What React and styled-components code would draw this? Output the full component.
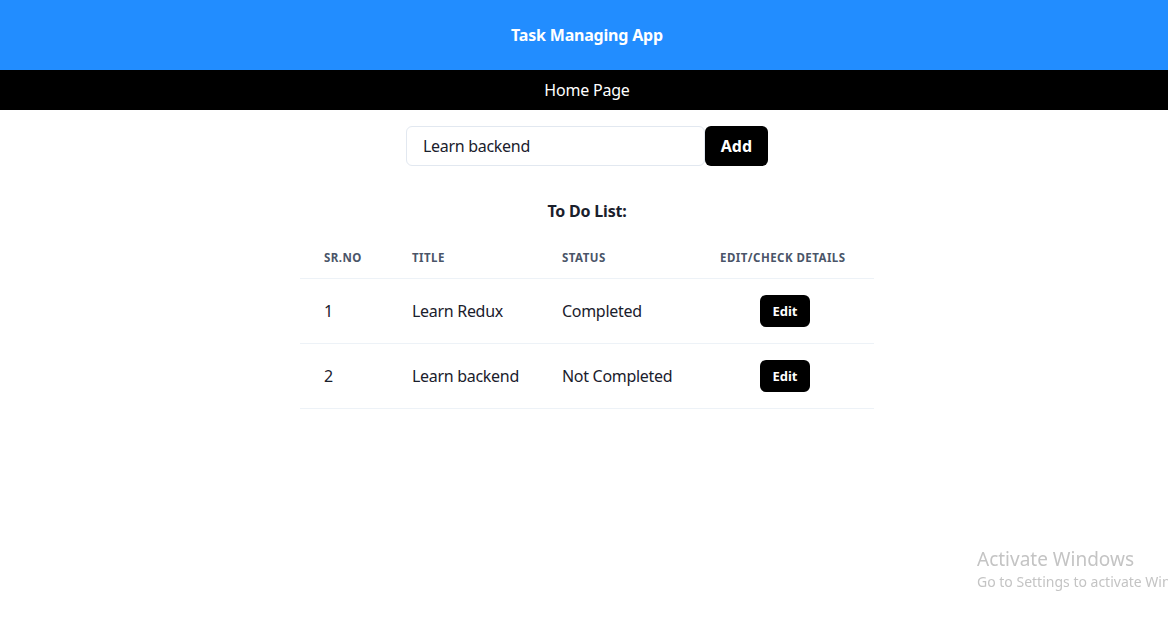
import React from "react";
import styled, { createGlobalStyle } from "styled-components";

const FONT = `"Noto Sans", "Open Sans", sans-serif`;

const Global = createGlobalStyle`
  html, body { margin: 0; padding: 0; background: #fff; overflow: hidden; }
  body { font-family: ${FONT}; color: #1a202c; }
  * { box-sizing: border-box; }
`;

const Page = styled.div`
  width: 1174px;
  min-height: 623px;
`;

const Header = styled.header`
  height: 70px;
  background: #228dff;
  color: #fff;
  display: flex;
  align-items: center;
  justify-content: center;
  font-weight: 700;
  font-size: 16px;
  letter-spacing: -0.2px;
`;

const Nav = styled.nav`
  height: 40px;
  background: #000;
  color: #fff;
  display: flex;
  align-items: center;
  justify-content: center;
  font-size: 16px;
  letter-spacing: -0.2px;
`;

const Main = styled.main`
  display: flex;
  flex-direction: column;
  align-items: center;
  padding-top: 16px;
`;

const InputRow = styled.div`
  display: flex;
  width: 362px;
`;

const Input = styled.input`
  width: 300px;
  height: 40px;
  border: 1px solid #e2e8f0;
  border-radius: 6px;
  padding: 0 16px;
  font-family: ${FONT};
  font-size: 16px;
  letter-spacing: -0.3px;
  color: #1a202c;
  outline: none;
`;

const Button = styled.button`
  border: none;
  background: #000;
  color: #fff;
  font-family: ${FONT};
  font-weight: 700;
  border-radius: 6px;
  cursor: pointer;
  height: ${(p) => (p.$small ? "32px" : "40px")};
  font-size: ${(p) => (p.$small ? "13px" : "16px")};
  padding: 0 ${(p) => (p.$small ? "12px" : "16px")};
`;

const Heading = styled.h2`
  margin: 34px 0 16px;
  font-size: 16px;
  font-weight: 700;
  line-height: 22px;
  letter-spacing: -0.2px;
`;

const Table = styled.table`
  width: 574px;
  border-collapse: collapse;
  table-layout: fixed;
`;

const Th = styled.th`
  text-align: left;
  padding: 12px 24px;
  font-size: 11.5px;
  line-height: 16px;
  font-weight: 700;
  letter-spacing: 0.04em;
  text-transform: uppercase;
  color: #4a5568;
  border-bottom: 1px solid #edf2f7;
  white-space: nowrap;
  width: ${(p) => p.$w}px;
`;

const Td = styled.td`
  padding: 16px 24px;
  font-size: 16px;
  line-height: 20px;
  letter-spacing: -0.3px;
  white-space: nowrap;
  border-bottom: 1px solid #edf2f7;
  text-align: ${(p) => (p.$center ? "center" : "left")};
  vertical-align: middle;
`;

const Watermark = styled.div`
  position: fixed;
  left: 977px;
  top: 546px;
  color: #c4c4c4;
  font-family: "Noto Sans", sans-serif;
  white-space: nowrap;
  pointer-events: none;
`;

const WmTitle = styled.div`
  font-size: 19px;
  line-height: 26px;
`;

const WmSub = styled.div`
  font-size: 14px;
  line-height: 20px;
`;

const todos = [
  { id: 1, title: "Learn Redux", status: "Completed" },
  { id: 2, title: "Learn backend", status: "Not Completed" },
];

export default function App() {
  return (
    <Page>
      <Global />
      <Header>Task Managing App</Header>
      <Nav>Home Page</Nav>
      <Main>
        <InputRow>
          <Input defaultValue="Learn backend" />
          <Button>Add</Button>
        </InputRow>
        <Heading>To Do List:</Heading>
        <Table>
          <thead>
            <tr>
              <Th $w={88}>Sr.No</Th>
              <Th $w={150}>Title</Th>
              <Th $w={158}>Status</Th>
              <Th $w={178}>Edit/Check Details</Th>
            </tr>
          </thead>
          <tbody>
            {todos.map((t) => (
              <tr key={t.id}>
                <Td>{t.id}</Td>
                <Td>{t.title}</Td>
                <Td>{t.status}</Td>
                <Td $center>
                  <Button $small>Edit</Button>
                </Td>
              </tr>
            ))}
          </tbody>
        </Table>
      </Main>
      <Watermark>
        <WmTitle>Activate Windows</WmTitle>
        <WmSub>Go to Settings to activate Windows.</WmSub>
      </Watermark>
    </Page>
  );
}
